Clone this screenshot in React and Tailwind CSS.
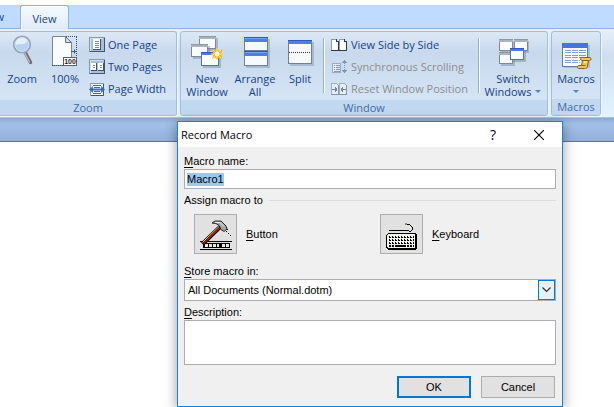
import React from "react";

const UI_FONT = "font-['Open_Sans','Noto_Sans',sans-serif]";
const FORM_FONT = "font-['Liberation_Sans',Arial,sans-serif]";

function ZoomIcon() {
  return (
    <svg width="32" height="32" viewBox="0 0 32 32" aria-hidden="true">
      <path d="M19 18L24.5 28.5" stroke="#6d6d70" strokeWidth="3.500" strokeLinecap="round" />
      <path d="M18.500 18.500L23.5 28" stroke="#c4bfbc" strokeWidth="1.300" strokeLinecap="round" />
      <circle cx="16" cy="10.5" r="8.2" fill="#b4d2f3" stroke="#97a3b3" strokeWidth="1.8" />
      <path d="M9.5 11a6.5 6.5 0 0 1 12-4c-3 5-7 2-12 4z" fill="#e3effb" />
      <circle cx="16" cy="10.5" r="7" fill="none" stroke="#dce6f2" strokeWidth="0.8" />
    </svg>
  );
}

function HundredIcon() {
  return (
    <svg width="32" height="32" viewBox="0 0 32 32" aria-hidden="true">
      <path d="M3.5 2.500H16.500L22.500 8.500V31.500H3.500z" fill="#f9fbfe" stroke="#7d8793" />
      <path d="M16.500 2.500V8.500H22.500z" fill="#d3dbe5" stroke="#69737f" />
      <g stroke="#37506f" strokeDasharray="1 1" shapeRendering="crispEdges">
        <path d="M17 2.500H28M27.500 3V23M3 31.500H15" fill="none" />
      </g>
      <path d="M22 17.500H27M25.500 15.500V19.500" stroke="#3a5d8a" />
      <rect x="14.500" y="23.500" width="13" height="8" fill="#fff" stroke="#59616b" />
      <text x="21" y="30" textAnchor="middle" fontSize="7" fontWeight="700" fontFamily="Liberation Sans" fill="#222">100</text>
    </svg>
  );
}

function SmallFrame({ children }) {
  return (
    <svg width="16" height="16" viewBox="0 0 16 16" className="shrink-0" aria-hidden="true" shapeRendering="crispEdges">
      <rect x="0.500" y="0.500" width="15" height="14" fill="#a9bed8" stroke="#8399b5" />
      <path d="M1 1.500H14M1.500 1V14" stroke="#d4e2f3" />
      <path d="M1 14.500H16M15.500 1V15" stroke="#3f5571" />
      {children}
    </svg>
  );
}

function OnePageIcon() {
  return (
    <SmallFrame>
      <path d="M4 2H11V13H4z" fill="#fff" />
      <path d="M4 12.500H11.500V2" fill="none" stroke="#41536c" />
      <path d="M6 4.500H10M6 6.500H10M6 8.500H10M6 10.500H10" stroke="#7c8da4" />
    </SmallFrame>
  );
}

function TwoPagesIcon() {
  return (
    <SmallFrame>
      <path d="M2 4H7V11H2zM9 4H14V11H9z" fill="#fff" />
      <path d="M2 11.500H7.500V4M9 11.500H14.500V4" fill="none" stroke="#41536c" />
      <path d="M4 6.500H6M4 8.500H6M11 6.500H13M11 8.500H13" stroke="#7589a5" />
    </SmallFrame>
  );
}

function PageWidthIcon() {
  return (
    <svg width="16" height="16" viewBox="0 0 16 16" className="shrink-0" aria-hidden="true">
      <path d="M1.500 2.500H14.500V14.500H1.500z" fill="#fafcff" stroke="#8796ab" />
      <path d="M2 14.500H14.500V3" fill="none" stroke="#43536a" />
      <path d="M4 4.500H12M5 6.500H11M5 10.500H11M4 12.500H12" stroke="#53647b" />
      <path d="M0 8.500L4 5V7.500H12V5L16 8.500L12 12V9.500H4V12z" fill="#3a6fc0" />
    </svg>
  );
}

function MiniWindow({ x, y, w, h, blue }) {
  return (
    <g shapeRendering="crispEdges">
      <rect x={x + 2} y={y + 2} width={w} height={h} fill="#7487a5" opacity="0.45" />
      <rect x={x + 0.5} y={y + 0.5} width={w - 1} height={h - 1} fill="#fbfcfe" stroke={blue ? "#5374ab" : "#818891"} />
      <rect x={x} y={y} width={w} height="3" fill={blue ? "#4b7be5" : "#aab3bf"} />
      <rect x={x} y={y} width={w} height="1" fill={blue ? "#3058b9" : "#8f979f"} />
    </g>
  );
}

function NewWindowIcon() {
  return (
    <svg width="32" height="34" viewBox="0 0 32 34" aria-hidden="true">
      <MiniWindow x={8} y={2} w={17} h={13} />
      <MiniWindow x={0} y={10} w={17} h={13} />
      <MiniWindow x={10} y={18} w={18} h={14} blue />
      <path d="M21 15l3 2 2-3 2 3 3.500-2-1 4 1.500 1-1.500 1 1 4-3.500-1.500-2 2.500-2-2.500-3 1.500 1-3.500-2-1.500 2-1z" fill="#f5b915" />
      <path d="M26 14V26M20 20H32M22 16L30 24M30 16L22 24" stroke="#ffe56a" strokeWidth="1" />
      <circle cx="26" cy="20" r="2.400" fill="#fffbe0" />
    </svg>
  );
}

function ArrangeIcon() {
  return (
    <svg width="32" height="34" viewBox="0 0 32 34" aria-hidden="true" shapeRendering="crispEdges">
      <rect x="7" y="5" width="24" height="29" fill="#7487a5" opacity="0.4" />
      {[3, 17].map((y) => (
        <g key={y}>
          <rect x="5.500" y={y + 0.5} width="23" height={y === 3 ? 13 : 14} fill="#f7f9fd" stroke="#6d7f99" />
          <rect x="5" y={y} width="24" height="5" fill="#4e7fe6" />
          <rect x="5" y={y} width="24" height="1" fill="#3158b5" />
          <rect x="6" y={y + 1} width="22" height="1" fill="#7ba3f5" />
        </g>
      ))}
    </svg>
  );
}

function SplitIcon() {
  return (
    <svg width="32" height="34" viewBox="0 0 32 34" aria-hidden="true" shapeRendering="crispEdges">
      <rect x="6" y="8" width="24" height="24" fill="#7487a5" opacity="0.4" />
      <rect x="4.500" y="6.500" width="23" height="23" fill="#f7f9fd" stroke="#6d7f99" />
      <rect x="4" y="6" width="24" height="4" fill="#4e7fe6" />
      <rect x="4" y="6" width="24" height="1" fill="#3158b5" />
      <path d="M5 18.500H27" stroke="#333" strokeDasharray="1 1" />
    </svg>
  );
}

function SwitchIcon() {
  return (
    <svg width="32" height="34" viewBox="0 0 32 34" aria-hidden="true">
      <MiniWindow x={2} y={5} w={14} h={12} />
      <MiniWindow x={17} y={5} w={14} h={12} />
      <MiniWindow x={2} y={18} w={14} h={12} />
      <MiniWindow x={13} y={14} w={14} h={12} blue />
    </svg>
  );
}

function MacrosIcon() {
  return (
    <svg width="32" height="35" viewBox="0 0 32 35" aria-hidden="true">
      <g shapeRendering="crispEdges">
        <rect x="4" y="11" width="26" height="23" fill="#7487a5" opacity="0.35" />
        <rect x="2.500" y="9.500" width="25" height="23" fill="#fafcff" stroke="#5f7ba8" />
        <rect x="2" y="9" width="26" height="5" fill="#4674d9" />
        <path d="M5 16.500H26M5 18.500H26M5 21.500H26M5 23.500H26M5 26.500H20M5 28.500H20" stroke="#7f9fd6" />
        <path d="M11.500 15V31M18.500 15V31" stroke="#fafcff" />
      </g>
      <path d="M21.500 23.500h8c2 0 2 3 0 3h-1l-1 5c0 3-1.500 3-3 3h-5.500c-2 0-2-3 0-3h2.500l1-5c-2.500 0-2.500-3-1-3z" fill="#f4c55c" stroke="#8c5a14" />
      <path d="M22 26.500h6.500M21.500 31.500h4" stroke="#8c5a14" />
      <path d="M24 28h2.500" stroke="#fff0b8" strokeWidth="1.500" />
    </svg>
  );
}

function SideBySideIcon() {
  return (
    <svg width="17" height="16" viewBox="0 0 17 16" className="shrink-0" aria-hidden="true" shapeRendering="crispEdges">
      <path d="M1 2H5V4H7V13H1zM9 2H13V4H15V13H9z" fill="#fff" />
      <path d="M0.500 13V2.500H5M8.500 13V2.500H13" fill="none" stroke="#8c9bb0" />
      <path d="M0 13.500H7.500V4.500H5.500V2M8 13.500H15.500V4.500H13.500V2" fill="none" stroke="#26384f" />
    </svg>
  );
}

function SyncIcon() {
  return (
    <svg width="17" height="16" viewBox="0 0 17 16" className="shrink-0" aria-hidden="true" shapeRendering="crispEdges">
      <path d="M1.500 4.500H9.500V13.500H1.500z" fill="#e3ebf6" stroke="#9aabc3" />
      <path d="M3 6.500H4M5 6.500H9M3 8.500H4M5 8.500H9M3 10.500H4M5 10.500H9M3 12.500H9" stroke="#8497b3" />
      <path d="M13.500 1V5M13.500 6V7M13.500 8V9M13.500 10V14M12 2.500H15M11 3.500H16M12 12.500H15M11 11.500H16" stroke="#8193ae" />
    </svg>
  );
}

function ResetIcon() {
  return (
    <svg width="17" height="16" viewBox="0 0 17 16" className="shrink-0" aria-hidden="true" shapeRendering="crispEdges">
      <path d="M0.500 2.500H5.500L7.500 4.500V13.500H0.500zM8.500 2.500H13.500L15.500 4.500V13.500H8.500z" fill="#e6edf7" stroke="#9dadc4" />
      <path d="M0 13.500H7.500V4M8 13.500H15.500V4" fill="none" stroke="#8294b0" />
      <path d="M1 8.500H6M4.500 6V11M5.500 7V10M10 8.500H15M11.500 6V11M10.500 7V10" stroke="#7285a3" />
    </svg>
  );
}

function HammerIcon() {
  return (
    <svg width="32" height="32" viewBox="0 0 32 32" aria-hidden="true">
      <g shapeRendering="crispEdges">
        <path d="M0 23.500H32M0 31.500H32" stroke="#000" />
        <rect x="3" y="25" width="27" height="5" fill="#000" />
        <path d="M5 26h3v3h-3zM9 26h3v3h-3zM13 26h3v3h-3zM17 26h2v3h-2zM22 26h3v3h-3zM26 26h3v3h-3z" fill="#e8e8e8" />
      </g>
      <path d="M21 8L2.500 26" stroke="#000" strokeWidth="4.200" />
      <path d="M20.500 9L3.500 25.500" stroke="#b91c10" strokeWidth="1.300" />
      <path d="M19.500 8L2.500 24.500" stroke="#f3d777" strokeWidth="1" />
      <path d="M12 5L15 3h6l5 5 1 3-3 2.500-3-2-2-4-3-2z" fill="#a4a7aa" stroke="#000" strokeWidth="0.800" />
      <path d="M15 4.500h5l4 4" fill="none" stroke="#eceff1" />
      <path d="M26 13.500h1M28 15.500h1M30 17.500h1M27 11.500h1" stroke="#000" shapeRendering="crispEdges" />
    </svg>
  );
}

function KeyboardIcon() {
  return (
    <svg width="32" height="32" viewBox="0 0 32 32" aria-hidden="true" shapeRendering="crispEdges">
      <path d="M3 13l2-1 2 1 2-1 2 1 2-1 2 1 2-1 2 1 2-1 2 1h2l1-1V9l-2-2-3-1-2-1" fill="none" stroke="#000" />
      <path d="M19 5h2v2h-2z" fill="#8d8c45" />
      <path d="M2 15H29L31 17V30L29 32H2L0 30V17z" fill="#000" />
      <path d="M2 16H28L29 17V29L28 30H2L1 29V17z" fill="#f3f3ee" />
      <path d="M3 18.500H28M3 21.500H28M3 24.500H28M3 27.500H28" stroke="#000" strokeWidth="2" strokeDasharray="2 1" />
      <path d="M11 27.500H20" stroke="#000" strokeWidth="2" />
      <path d="M4 18.500H28M4 21.500H28M4 24.500H28" stroke="#fff" strokeDasharray="1 2" />
    </svg>
  );
}

function Caret() {
  return <span className="inline-block border-x-3 border-t-3 border-x-transparent border-t-[#5b7fb8]" aria-hidden="true" />;
}

function BigButton({ icon, lines, width, caret }) {
  return (
    <button type="button" className={`flex shrink-0 flex-col items-center text-[#15428b] ${width}`}>
      <span className="flex h-[38px] items-start">{icon}</span>
      {lines.map((line, i) => (
        <span key={line} className="flex h-[13px] items-center gap-1 whitespace-nowrap text-[11px] leading-[13px]">
          {line}
          {caret === "inline" && i === lines.length - 1 && <Caret />}
        </span>
      ))}
      {caret === "below" && <span className="flex h-[13px] items-center"><Caret /></span>}
    </button>
  );
}

function SmallButton({ icon, text, disabled }) {
  return (
    <button
      type="button"
      disabled={disabled}
      className="flex h-[22px] items-center gap-[3px] text-left text-[11px] leading-4 whitespace-nowrap text-[#15428b] disabled:text-[#8d8d8d]"
    >
      {icon}
      {text}
    </button>
  );
}

function Separator() {
  return <span className="mt-1 h-[55px] w-[2px] shrink-0 border-r border-l border-r-white border-l-[#8fb0db]" />;
}

function Group({ label, className, children }) {
  return (
    <section
      aria-label={label}
      className={`flex h-[85px] shrink-0 flex-col overflow-hidden rounded-[3px] border border-[#9ebddf] bg-linear-to-b from-[#dce8f5] via-[#c8d9ed] via-25% to-[#d9e8f8] shadow-[1px_1px_0_#f1f7fe] ${className}`}
    >
      <div className="flex h-[68px] pt-[2px]">{children}</div>
      <div className="flex-1 bg-[#c1d8f0] text-center text-[11px] leading-4 text-[#3e6aaa]">{label}</div>
    </section>
  );
}

function Ribbon() {
  return (
    <header className="cursor-default">
      <nav className="mt-[5px] flex h-6 items-end border-b border-[#8db2e3] bg-[#bfdbff]" aria-label="Ribbon tabs">
        <button type="button" className="flex h-6 w-5 items-center justify-end pt-[3px] pr-4 text-[11px] text-[#15428b]">
          w
        </button>
        <button
          type="button"
          className="-mb-px h-6 w-[49px] rounded-t-[3px] border border-b-0 border-[#8db2e3] bg-linear-to-b from-[#f5faff] to-[#e0ebf8] pt-[3px] text-[11px] text-[#15428b] shadow-[inset_1px_1px_0_#fff]"
        >
          View
        </button>
      </nav>
      <div className="flex h-[89px] gap-[3px] overflow-hidden border-b border-[#a4c5e6] bg-linear-to-b from-[#e7f0fa] via-[#cfdef0] via-30% to-[#e3f4ff] pt-[2px]">
        <Group label="Zoom" className="w-[177px] rounded-l-none border-l-0">
          <BigButton icon={<ZoomIcon />} lines={["Zoom"]} width="w-11" />
          <BigButton icon={<HundredIcon />} lines={["100%"]} width="w-[42px]" />
          <div className="ml-[3px]">
            <SmallButton icon={<OnePageIcon />} text="One Page" />
            <SmallButton icon={<TwoPagesIcon />} text="Two Pages" />
            <SmallButton icon={<PageWidthIcon />} text="Page Width" />
          </div>
        </Group>
        <Group label="Window" className="w-[368px]">
          <BigButton icon={<NewWindowIcon />} lines={["New", "Window"]} width="w-[52px]" />
          <BigButton icon={<ArrangeIcon />} lines={["Arrange", "All"]} width="w-[44px]" />
          <BigButton icon={<SplitIcon />} lines={["Split"]} width="w-[46px]" />
          <Separator />
          <div className="mr-[7px] ml-[6px] w-[140px]">
            <SmallButton icon={<SideBySideIcon />} text="View Side by Side" />
            <SmallButton icon={<SyncIcon />} text="Synchronous Scrolling" disabled />
            <SmallButton icon={<ResetIcon />} text="Reset Window Position" disabled />
          </div>
          <Separator />
          <BigButton icon={<SwitchIcon />} lines={["Switch", "Windows"]} width="w-[66px]" caret="inline" />
        </Group>
        <Group label="Macros" className="w-[50px]">
          <BigButton icon={<MacrosIcon />} lines={["Macros"]} width="w-12" caret="below" />
        </Group>
      </div>
    </header>
  );
}

function Dialog() {
  return (
    <form
      role="dialog"
      aria-label="Record Macro"
      onSubmit={(e) => e.preventDefault()}
      className="absolute top-[121px] left-[177px] w-[386px] border border-[#1883d7] bg-[#f0f0f0] text-[11px] leading-4 text-black shadow-[0_3px_12px_rgba(0,0,0,0.4)]"
    >
      <div className="flex h-[25px] items-center bg-white pl-[3px]">
        <h1 className="flex-1">Record Macro</h1>
        <button type="button" aria-label="Help" className="h-full w-[46px] text-sm">?</button>
        <button type="button" aria-label="Close" className="flex h-full w-[46px] items-center justify-center">
          <svg width="10" height="10" viewBox="0 0 10 10" stroke="#000" strokeWidth="1.100" aria-hidden="true">
            <path d="M0 0L10 10M10 0L0 10" />
          </svg>
        </button>
      </div>

      <div className={`flex flex-col px-[6px] pt-[6px] pb-2 ${FORM_FONT}`}>
        <label htmlFor="macro-name"><u className="underline-offset-2">M</u>acro name:</label>
        <div className="flex h-5 items-center border border-[#abadb3] bg-white px-[2px]">
          <input
            id="macro-name"
            defaultValue="Macro1"
            className="field-sizing-content h-[13px] bg-[#99c9ef] leading-[13px] outline-none"
          />
        </div>

        <fieldset className="mt-[3px] h-[71px]">
          <div className="flex items-center gap-[6px]">
            <legend>Assign macro to</legend>
            <span className="h-px flex-1 bg-[#dcdcdc]" />
          </div>
          <div className="mt-[6px] grid grid-cols-2 pl-[10px]">
            <div className="flex items-center gap-[9px]">
              <button id="assign-button" type="button" className="flex h-10 w-[43px] items-center justify-center border border-[#adadad] bg-[#e1e1e1]">
                <HammerIcon />
              </button>
              <label htmlFor="assign-button"><u className="underline-offset-2">B</u>utton</label>
            </div>
            <div className="flex items-center gap-[9px] pl-[5px]">
              <button id="assign-keyboard" type="button" className="flex h-10 w-[43px] items-center justify-center border border-[#adadad] bg-[#e1e1e1]">
                <KeyboardIcon />
              </button>
              <label htmlFor="assign-keyboard"><u className="underline-offset-2">K</u>eyboard</label>
            </div>
          </div>
        </fieldset>

        <label htmlFor="store-in"><u className="underline-offset-2">S</u>tore macro in:</label>
        <div className="relative">
          <select id="store-in" className="block h-[22px] w-full appearance-none border border-[#abadb3] bg-white pl-[3px] outline-none">
            <option>All Documents (Normal.dotm)</option>
          </select>
          <span className="pointer-events-none absolute inset-y-px right-px flex w-[17px] items-center justify-center border border-[#0078d7] bg-[#e5f1fb]">
            <svg width="9" height="6" viewBox="0 0 9 6" fill="none" stroke="#333" strokeWidth="1.200" aria-hidden="true">
              <path d="M0.500 0.500L4.500 4.500L8.500 0.500" />
            </svg>
          </span>
        </div>

        <label htmlFor="description" className="mt-[3px]"><u className="underline-offset-2">D</u>escription:</label>
        <textarea id="description" className="block h-[45px] resize-none border border-[#abadb3] bg-white outline-none" />

        <div className="mt-[11px] flex justify-end gap-[10px] pr-px">
          <button type="submit" className="h-[22px] w-[74px] border-2 border-[#0078d7] bg-[#e1e1e1] leading-4">OK</button>
          <button type="button" className="h-[22px] w-[74px] border border-[#adadad] bg-[#e1e1e1]">Cancel</button>
        </div>
      </div>
    </form>
  );
}

export default function App() {
  return (
    <div className={`relative flex min-h-screen flex-col overflow-hidden bg-white ${UI_FONT}`}>
      <Ribbon />
      <div className="h-6 border-b border-[#64748c] bg-linear-to-b from-[#8ba9d0] via-[#a3c0e8] via-25% to-[#92b1dc]" />
      <main className="flex-1 bg-white">
        <Dialog />
      </main>
    </div>
  );
}
